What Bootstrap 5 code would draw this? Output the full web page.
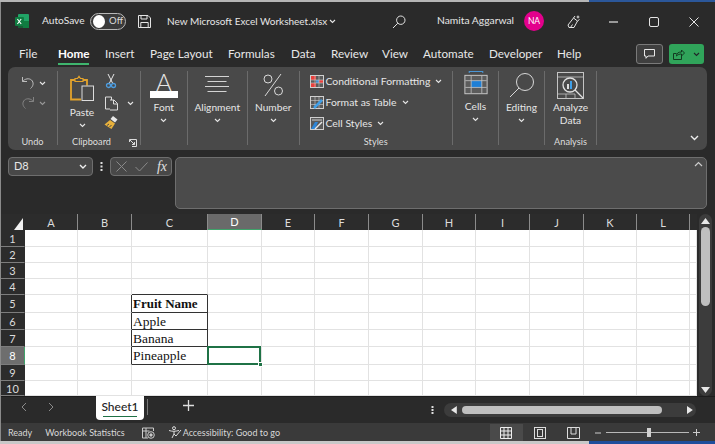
<!DOCTYPE html>
<html lang="en"><head><meta charset="utf-8"><title>Excel</title>
<link href="https://cdn.jsdelivr.net/npm/bootstrap@5.3.0/dist/css/bootstrap.min.css" rel="stylesheet">
<style>
html,body{margin:0;background:#2a2a2a;overflow:hidden}
body{font-family:Lato,Roboto,sans-serif;font-size:11px;color:#e6e6e6}
.shot{width:715px;height:444px}
.edge-top{height:2px;background:linear-gradient(90deg,#b5b5b5 0 589px,#2b579a 589px)}
.edge-bot{height:3px;background:linear-gradient(90deg,#c8c8c8 0 589px,#1f4e9c 589px)}
.win{height:439px;border-left:1px solid #8a8a8a;background:#2a2a2a}
.sprite{width:0;height:0;position:absolute}
.titlebar{height:38px;padding-left:14px}
.t-auto{margin-left:13px;width:48px;font-size:10.2px;white-space:nowrap}
.togl{width:36px;height:17px;border:1px solid #b8b8b8;border-radius:9px;background:#3a3a3a;padding:0 2px;font-size:9.500px;color:#ddd}
.togl i{width:13px;height:13px;border-radius:50%;background:#fff;display:block;margin-right:4px}
.t-save{margin-left:11px}
.t-doc{margin-left:15px;width:162px;white-space:nowrap;font-size:10px}
.t-search{margin-left:56px;width:45px}
.t-name{width:87px;white-space:nowrap;font-size:10.3px}
.avatar{width:20px;height:20px;border-radius:50%;background:#e3008c;color:#fff;font-size:8.500px;line-height:20px;text-align:center}
.t-pen{margin-left:23px;width:42px}
.t-min{width:40px}.t-max{width:40px}
.tabstrip{height:27px;padding-left:18px;display:grid;grid-template-columns:39px 47px 45px 78px 63px 40px 51px 41px 66px 68px 79px 33px 38px;align-items:start}
.tabitem{font-size:11.7px;line-height:26px;white-space:nowrap;position:relative;color:#e8e8e8}
.tabon{font-weight:700;color:#fff}
.tabon::after{content:"";position:absolute;left:0;width:31px;top:23px;height:2px;background:#3fb56e}
.combtn{width:27px;height:20px;margin-top:4px;border:1px solid #7a7a7a;background:#3f3f3f;border-radius:3px}
.sharebtn{width:35px;height:20px;margin-top:4px;background:#30a45a;border-radius:3px}
.ribbon{height:83px;margin:0 8px 0 7px;background:#494949;border-radius:7px;padding:4px 0 5px 0}
.rgroup{border-right:1px solid #6b6b6b;flex:none}
.rbody{height:63px}
.rlabel{height:11px;line-height:15px;text-align:center;font-size:9.2px;color:#dedede;white-space:nowrap}
.w-undo{width:50px}.w-clip{width:83px}.w-font{width:46.500px}.w-align{width:60.500px}.w-num{width:51.500px}.w-sty{width:153.500px}.w-cell{width:46px}.w-edit{width:46px}.w-ana{width:52px}
.bigico{height:29px;margin-top:1px}
.biglbl{font-size:10.2px;line-height:13px;text-align:center;white-space:nowrap}
.glyph-a{font:300 24px/19px Lato,sans-serif;height:19px;margin-top:1px;color:#e6e6e6}
.fontbar{width:28px;height:7px;background:#fff;margin-bottom:3px}
.car{width:7px;height:5px;margin-top:4px;display:block}
.undo-col{padding:2px 0 0 13px}
.undo-row{height:20px}
.paste-col{width:48px}
.paste-col .bigico{height:30px;margin-top:3px}
.paste-col .biglbl{margin-top:2px}
.small-col{padding-top:1px;margin-left:-2px}
.small-row{height:21px}
.launch-txt{flex-grow:1;padding-right:4px}
.launch{margin:5px 3px 0 0}
.sty-col{padding-left:10px}
.sty-row{height:21px;font-size:10.4px;white-space:nowrap;gap:2px}
.sty-row .car{margin:0 0 0 3px}
.fx-row{height:64px;padding:7px 8px 5px 7px}
.namebox{width:85px;height:19px;border:1px solid #6e6e6e;border-radius:4px;background:#484848;padding:0 5px;font-size:11px}
.fxdots{width:17px}
.fxbox{width:62px;height:19px;border:1px solid #6e6e6e;border-radius:4px;background:#484848;padding:0 4px 0 5px}
.fxglyph{font-family:"Liberation Serif",serif;font-style:italic;font-size:14px;color:#e0e0e0;line-height:1}
.fxinput{flex-grow:1;margin-left:3px;height:52px;border:1px solid #6e6e6e;border-radius:5px;background:#4b4b4b;padding:3px 3px}
.gridwrap{height:182px}
table.sheet{table-layout:fixed;border-collapse:separate;border-spacing:0;width:696px;background:#fff}
.sheet col:nth-child(1){width:24px}
.sheet col.cw53{width:53px}.sheet col.cw54{width:54px}.sheet col.cw76{width:76px}.sheet col.cw7{width:7px}
.sheet th{font-weight:400;background:#2c2c2c;color:#dcdcdc;font-size:11px;text-align:center;padding:0;line-height:1}
.sheet thead th{height:16px;border-right:1px solid #8b8b8b}
.sheet thead th:first-child{border-right:none;text-align:right;padding:0 2px 0 0;vertical-align:bottom}
.sheet thead th:last-child{border-right:none}
.sheet thead th.hsel{background:#6a6a6a;color:#fff;border-bottom:1px solid #3fa36a}
.sheet tbody th{border-bottom:1px solid #7d7d7d;border-right:1px solid #2c2c2c}
.sheet tbody th.rsel{background:#6e6e6e;color:#fff;border-right:1px solid #3fa36a}
.sheet td{border-right:1px solid #e2e2e2;border-bottom:1px solid #e2e2e2;padding:1px 1px 0;font:13.500px/1 "Liberation Serif",serif;color:#111;white-space:nowrap;overflow:visible}
.sheet td b{font-size:13px}
.sheet td.brd-r{border-right-color:#333}
.sheet td.brd-b{border-bottom-color:#333}
.h15{height:15px}.h16{height:16px}.h17{height:17px}.h18{height:18px}
.sheet td.picked{position:relative}
.sheet td.picked::after{content:"";position:absolute;left:-1px;top:-1px;right:0;bottom:-1px;border:2px solid #1f7246}
.sheet td.picked::before{content:"";position:absolute;right:-2px;bottom:-3px;width:5px;height:5px;background:#1f7246;border:1px solid #fff;z-index:1}
.vscroll{width:18px;background:#2a2a2a;padding:0 3px 0 2px}
.vtrack{width:13px;height:182px;background:#3c3c3c;border-radius:7px;padding:4px 2px 3px 2px}
.vthumb{width:9px;height:79px;margin-top:3px;background:#bfbfbf;border-radius:5px}
.tabbar{height:27px;border-top:1px solid #1c1c1c}
.navs{width:95px;padding-left:20px;gap:21px;height:20px}
.sheettab{width:48px;height:24px;margin-top:-1px;background:#fff;border-radius:0 0 4px 4px;color:#222;font-size:12px;text-align:center;line-height:22px;position:relative;font-weight:500}
.sheettab::after{content:"";position:absolute;left:7px;right:7px;bottom:3px;height:1.500px;background:#1f7246}
.tabsep{width:1px;height:16px;background:#777;margin:2px 0 0 3px}
.plus{margin-left:35px;margin-top:3px}
.tabdots{margin-left:231px;margin-top:1px;width:20px;padding-left:6px}
.htrack{width:252px;height:14px;margin-left:-1px;margin-top:6px;background:#3c3c3c;border-radius:7px;padding:0 3px}
.hthumb{width:206px;height:8px;background:#bfbfbf;border-radius:4px;margin:0 25px 0 5px}
.statusbar{height:18px;background:#3a3a3a;font-size:9px;color:#d8d8d8;padding:1px 15px 0 7px;white-space:nowrap}
.s-stat{margin-left:13px}
.s-ico1{margin-left:17px}
.s-ico2{margin-left:14px}
.s-acc{margin-left:1px}
.s-view{margin-left:auto;width:33px;height:17px;background:#4a4a4a;padding-left:10px}
.s-v2{margin-left:11px}
.s-v3{margin-left:21px}
.s-minus{margin-left:15px}
.slider{width:83px;height:1px;background:#b8b8b8;margin:0 4px 0 5px;position:relative}
.slider::after{content:"";position:absolute;left:41px;top:-4px;width:4px;height:9px;background:#d0d0d0}
</style></head><body>
<svg class="sprite" aria-hidden="true"><defs>
<symbol id="cv" viewBox="0 0 7 5"><path d="M1 1l2.500 2.500L6 1" fill="none" stroke="currentColor" stroke-width="1.100"/></symbol>
</defs></svg>
<div class="shot d-flex flex-column">
<div class="edge-top"></div>
<div class="win">
 <div class="titlebar d-flex align-items-center">
  <svg width="14" height="14" viewBox="0 0 14 14"><rect x="3" y="0" width="11" height="14" rx="1" fill="#21a366"/><rect x="8" y="7" width="6" height="7" fill="#107c41"/><rect x="3" y="7" width="5" height="7" fill="#185c37"/><rect x="0" y="3" width="9" height="9" rx="1" fill="#107c41"/><path d="M2.400 5l3.800 5M6.200 5l-3.800 5" stroke="#fff" stroke-width="1.100"/></svg>
  <span class="t-auto">AutoSave</span>
  <span class="togl d-flex align-items-center"><i></i>Off</span>
  <svg class="t-save" width="15" height="15" viewBox="0 0 15 15" fill="none" stroke="#e4e4e4" stroke-width="1"><path d="M1.500 1.500h9.500l2.500 2.500v9.500h-12z"/><path d="M4 1.500v3.500h6v-3.500M3.800 13.500v-5h7.400v5"/></svg>
  <span class="t-doc d-flex align-items-center">New Microsoft Excel Worksheet.xlsx</span>
  <svg class="car m-0" viewBox="0 0 7 5"><use href="#cv"/></svg>
  <span class="t-search"><svg width="14" height="14" viewBox="0 0 14 14" fill="none" stroke="#e4e4e4" stroke-width="1"><circle cx="8.800" cy="5.200" r="4.200"/><path d="M5.800 8.200L1 13"/></svg></span>
  <span class="t-name">Namita Aggarwal</span>
  <span class="avatar">NA</span>
  <span class="t-pen"><svg width="15" height="15" viewBox="0 0 15 15" fill="none" stroke="#e4e4e4" stroke-width="1"><path d="M2 13.500L1 11l5.500-7 4 3-3.500 6.500zM6.500 4l1.500-2M10.500 7l2-1.500M3.500 13.500l2-3"/><path d="M11 1l.6 1.400L13 3l-1.400.6L11 5l-.6-1.400L9 3l1.400-.6z" fill="#e4e4e4" stroke="none"/></svg></span>
  <span class="t-min"><svg width="9" height="2" viewBox="0 0 9 2"><path d="M0 1h9" stroke="#e4e4e4" stroke-width="1.200"/></svg></span>
  <span class="t-max"><svg width="10" height="10" viewBox="0 0 10 10"><rect x=".5" y=".5" width="9" height="9" rx="1.500" fill="none" stroke="#e4e4e4"/></svg></span>
  <span><svg width="10" height="10" viewBox="0 0 10 10"><path d="M.5.5l9 9M9.500.5l-9 9" stroke="#e4e4e4" stroke-width="1"/></svg></span>
 </div>
 <div class="tabstrip">
  <span class="tabitem">File</span><span class="tabitem tabon">Home</span><span class="tabitem">Insert</span><span class="tabitem">Page Layout</span><span class="tabitem">Formulas</span><span class="tabitem">Data</span><span class="tabitem">Review</span><span class="tabitem">View</span><span class="tabitem">Automate</span><span class="tabitem">Developer</span><span class="tabitem">Help</span>
  <span class="combtn d-flex align-items-center justify-content-center"><svg width="11" height="10" viewBox="0 0 11 10"><path d="M.5.5h10v6.500H4L2 9.300V7H.5z" fill="none" stroke="#e8e8e8"/></svg></span>
  <span class="sharebtn d-flex align-items-center justify-content-center gap-2"><svg width="12" height="12" viewBox="0 0 12 12" fill="none" stroke="#123a20" stroke-width="1"><path d="M.5 5.500h3M.5 5.500v6h8V8"/><path d="M3.500 8c0-3 2-4 5-4V2l3 3-3 3V6c-2 0-3.500.5-5 2z"/></svg><svg class="car text-dark m-0" viewBox="0 0 7 5"><use href="#cv"/></svg></span>
 </div>
 <div class="ribbon d-flex">
  <div class="rgroup w-undo d-flex flex-column">
   <div class="rbody undo-col">
    <div class="undo-row d-flex align-items-center gap-1"><svg width="14" height="15" viewBox="0 0 14 15" fill="none" stroke="#bdbdbd" stroke-width="1"><path d="M1.500 1v4.500H6M1.500 5.500C4 2.500 8 2 10.500 4c2.500 2.500 2 6-1 8.500"/></svg><svg class="car m-0" viewBox="0 0 7 5"><use href="#cv"/></svg></div>
    <div class="undo-row d-flex align-items-center gap-1 opacity-50"><svg width="14" height="15" viewBox="0 0 14 15" fill="none" stroke="#bdbdbd" stroke-width="1"><path d="M12.500 1v4.500H8M12.500 5.500C10 2.500 6 2 3.500 4c-2.500 2.500-2 6 1 8.500"/></svg><svg class="car m-0" viewBox="0 0 7 5"><use href="#cv"/></svg></div>
   </div>
   <div class="rlabel">Undo</div>
  </div>
  <div class="rgroup w-clip d-flex flex-column">
   <div class="rbody d-flex">
    <div class="paste-col d-flex flex-column align-items-center">
     <svg class="bigico" width="25" height="27" viewBox="0 0 25 27" fill="none"><path d="M5 4.500H1V24h10" stroke="#e3a32c" stroke-width="1.800"/><path d="M5 6V3h2.500L9 .8 10.500 3H13v3z" stroke="#e3a32c" stroke-width="1.200"/><path d="M13 4.500h4V10" stroke="#e3a32c" stroke-width="1.800"/><rect x="12" y="10.500" width="11.500" height="14.500" stroke="#dcdcdc" fill="#4a4a4a"/></svg>
     <span class="biglbl">Paste</span>
     <svg class="car" viewBox="0 0 7 5"><use href="#cv"/></svg>
    </div>
    <div class="small-col d-flex flex-column">
     <div class="small-row"><svg width="14" height="16" viewBox="0 0 14 16" fill="none"><path d="M4 1l4.500 9M10 1L5.500 10" stroke="#e8e8e8"/><circle cx="4.500" cy="12.500" r="2" stroke="#4d9de0" stroke-width="1.300"/><circle cx="9.500" cy="12.500" r="2" stroke="#4d9de0" stroke-width="1.300"/></svg></div>
     <div class="small-row d-flex align-items-center gap-2"><svg width="15" height="15" viewBox="0 0 15 15" fill="none" stroke="#dcdcdc"><path d="M1.500 1h6v12h-6z"/><path d="M6 4h4l3.500 3.500V14H6" fill="#4a4a4a"/><path d="M9.500 4v4h4"/></svg><svg class="car m-0" viewBox="0 0 7 5"><use href="#cv"/></svg></div>
     <div class="small-row"><svg width="14" height="14" viewBox="0 0 14 14"><path d="M9 0l4.500 3.500-2.500 3L6.500 3z" fill="#e8e8e8"/><path d="M6 4l5 3.500L7.500 13 .5 8.500z" fill="#e8b13c"/><path d="M3 9.500l2-1.500M5.500 11l2-2" stroke="#4a4a4a"/></svg></div>
    </div>
   </div>
   <div class="rlabel d-flex"><span class="launch-txt">Clipboard</span><svg class="launch" width="8" height="8" viewBox="0 0 8 8" fill="none" stroke="#dcdcdc"><path d="M.5 3V.5h7v7H3"/><path d="M1 1l4.500 4.500M3 5.500h2.500V3"/></svg></div>
  </div>
  <div class="rgroup w-font d-flex flex-column">
   <div class="rbody d-flex flex-column align-items-center">
    <div class="glyph-a">A</div><div class="fontbar"></div>
    <span class="biglbl">Font</span>
    <svg class="car" viewBox="0 0 7 5"><use href="#cv"/></svg>
   </div><div class="rlabel"></div>
  </div>
  <div class="rgroup w-align d-flex flex-column">
   <div class="rbody d-flex flex-column align-items-center">
    <svg class="bigico" width="26" height="29" viewBox="0 0 26 29" stroke="#d4d4d4" stroke-width="1"><path d="M1 4.500h24M3.500 9.500h19M1 14.500h24M3.500 19.500h19"/></svg>
    <span class="biglbl">Alignment</span>
    <svg class="car" viewBox="0 0 7 5"><use href="#cv"/></svg>
   </div><div class="rlabel"></div>
  </div>
  <div class="rgroup w-num d-flex flex-column">
   <div class="rbody d-flex flex-column align-items-center">
    <svg class="bigico" width="24" height="29" viewBox="0 0 24 29" fill="none" stroke="#d8d8d8"><circle cx="7" cy="7" r="4"/><circle cx="17.500" cy="19" r="4"/><path d="M20 2L4 24"/></svg>
    <span class="biglbl">Number</span>
    <svg class="car" viewBox="0 0 7 5"><use href="#cv"/></svg>
   </div><div class="rlabel"></div>
  </div>
  <div class="rgroup w-sty d-flex flex-column">
   <div class="rbody sty-col">
    <div class="sty-row d-flex align-items-center"><svg width="14" height="13" viewBox="0 0 14 13"><rect x=".5" y=".5" width="13" height="12" fill="#5a5a5a" stroke="#cfcfcf"/><path d="M1 1h5v4H1zM9 5h4v3H9zM1 8h5v4H1z" fill="#e8403c"/><path d="M6 5h3v3H6z" fill="#3f8fd8"/><path d="M5 1v11M9 1v11M1 5h12M1 8h12" stroke="#cfcfcf" stroke-width=".6"/></svg><span>Conditional Formatting</span><svg class="car" viewBox="0 0 7 5"><use href="#cv"/></svg></div>
    <div class="sty-row d-flex align-items-center"><svg width="14" height="13" viewBox="0 0 14 13"><rect x=".5" y=".5" width="13" height="12" fill="#5a5a5a" stroke="#cfcfcf"/><path d="M1 4.500h12M1 8.500h12M5 1v11M9 1v11" stroke="#cfcfcf" stroke-width=".6"/><path d="M4 12L12 4" stroke="#3f9fe8" stroke-width="2.500"/></svg><span>Format as Table</span><svg class="car" viewBox="0 0 7 5"><use href="#cv"/></svg></div>
    <div class="sty-row d-flex align-items-center"><svg width="14" height="13" viewBox="0 0 14 13"><rect x=".5" y=".5" width="13" height="12" fill="#5a5a5a" stroke="#cfcfcf"/><path d="M2 3h10" stroke="#cfcfcf"/><path d="M1 12l4-7h3l-3 7z" fill="#2e86d8"/><path d="M5 12l7-7" stroke="#e8e8e8" stroke-width="1.500"/></svg><span>Cell Styles</span><svg class="car" viewBox="0 0 7 5"><use href="#cv"/></svg></div>
   </div>
   <div class="rlabel">Styles</div>
  </div>
  <div class="rgroup w-cell d-flex flex-column">
   <div class="rbody d-flex flex-column align-items-center">
    <svg class="bigico mt-0" width="24" height="30" viewBox="0 0 24 30"><path d="M5 .5h14M5 0v2M19 0v2" stroke="#4d9de0"/><rect x=".5" y="4.500" width="23" height="19" fill="#5c5c5c" stroke="#c8c8c8"/><rect x="7" y="10" width="11" height="7" fill="#1e7fd6"/><path d="M1 10h22M1 17h22M7 5v18M18 5v18" stroke="#c8c8c8" stroke-width=".8" fill="none"/></svg>
    <span class="biglbl">Cells</span>
    <svg class="car" viewBox="0 0 7 5"><use href="#cv"/></svg>
   </div><div class="rlabel"></div>
  </div>
  <div class="rgroup w-edit d-flex flex-column">
   <div class="rbody d-flex flex-column align-items-center">
    <svg class="bigico" width="26" height="29" viewBox="0 0 26 29" fill="none" stroke="#d8d8d8"><circle cx="16" cy="10" r="8.500"/><path d="M10 16L1 25"/></svg>
    <span class="biglbl">Editing</span>
    <svg class="car" viewBox="0 0 7 5"><use href="#cv"/></svg>
   </div><div class="rlabel"></div>
  </div>
  <div class="rgroup w-ana d-flex flex-column">
   <div class="rbody d-flex flex-column align-items-center">
    <svg class="bigico" width="28" height="29" viewBox="0 0 28 29" fill="none" stroke="#c4c4c4"><rect x=".5" y=".5" width="26" height="26" stroke-width="1"/><path d="M1 5h26M1 22h17M9 22v5M18 22v5" stroke-width=".8"/><circle cx="13" cy="13" r="7" stroke-width="1.300" stroke="#e0e0e0"/><path d="M18 18l8 8" stroke="#e0e0e0" stroke-width="1.300"/><path d="M10 12h2v5h-2z" fill="#ddd" stroke="none"/><path d="M13 9h2v8h-2z" fill="#3f9fe8" stroke="none"/></svg>
    <span class="biglbl">Analyze<br>Data</span>
   </div>
   <div class="rlabel">Analysis</div>
  </div>
  <div class="flex-grow-1 d-flex justify-content-end align-items-end pe-2"><svg width="9" height="6" viewBox="0 0 9 6" class="mb-1"><path d="M1 1l3.500 3.500L8 1" fill="none" stroke="#eee" stroke-width="1.400"/></svg></div>
 </div>
 <div class="fx-row d-flex align-items-start">
  <div class="namebox d-flex align-items-center justify-content-between"><span>D8</span><svg width="8" height="6" viewBox="0 0 8 6"><path d="M1 1l3 3 3-3" fill="none" stroke="#eee" stroke-width="1.400"/></svg></div>
  <div class="fxdots d-flex justify-content-center align-self-start mt-1"><svg width="3" height="11" viewBox="0 0 3 11" fill="#ddd"><rect x=".5" y="1" width="2" height="2"/><rect x=".5" y="4.500" width="2" height="2"/><rect x=".5" y="8" width="2" height="2"/></svg></div>
  <div class="fxbox d-flex align-items-center justify-content-between"><svg width="11" height="11" viewBox="0 0 11 11"><path d="M.5.5l10 10M10.500.5l-10 10" stroke="#8a8a8a"/></svg><svg width="13" height="10" viewBox="0 0 13 10"><path d="M.5 5l4 4L12.500.5" fill="none" stroke="#8a8a8a"/></svg><span class="fxglyph">fx</span></div>
  <div class="fxinput d-flex justify-content-end align-items-start"><svg width="9" height="6" viewBox="0 0 9 6"><path d="M1 5l3.500-3.500L8 5" fill="none" stroke="#ccc" stroke-width="1.200"/></svg></div>
 </div>
 <div class="gridwrap d-flex">
  <table class="sheet">
   <colgroup><col><col class="cw53"><col class="cw54"><col class="cw76"><col class="cw54"><col class="cw53"><col class="cw54"><col class="cw54"><col class="cw53"><col class="cw54"><col class="cw54"><col class="cw53"><col class="cw53"><col class="cw7"></colgroup>
   <thead><tr><th><svg width="9" height="12" viewBox="0 0 9 12" class="d-block ms-auto"><path d="M9 0v12H0z" fill="#f2f2f2"/></svg></th><th>A</th><th>B</th><th>C</th><th class="hsel">D</th><th>E</th><th>F</th><th>G</th><th>H</th><th>I</th><th>J</th><th>K</th><th>L</th><th></th></tr></thead>
   <tbody>
    <tr class="h17"><th>1</th><td></td><td></td><td></td><td></td><td></td><td></td><td></td><td></td><td></td><td></td><td></td><td></td><td></td></tr>
    <tr class="h16"><th>2</th><td></td><td></td><td></td><td></td><td></td><td></td><td></td><td></td><td></td><td></td><td></td><td></td><td></td></tr>
    <tr class="h16"><th>3</th><td></td><td></td><td></td><td></td><td></td><td></td><td></td><td></td><td></td><td></td><td></td><td></td><td></td></tr>
    <tr class="h16"><th>4</th><td></td><td></td><td class="brd-b"></td><td></td><td></td><td></td><td></td><td></td><td></td><td></td><td></td><td></td><td></td></tr>
    <tr class="h18"><th>5</th><td></td><td class="brd-r"></td><td class="brd-r brd-b"><b>Fruit Name</b></td><td></td><td></td><td></td><td></td><td></td><td></td><td></td><td></td><td></td><td></td></tr>
    <tr class="h17"><th>6</th><td></td><td class="brd-r"></td><td class="brd-r brd-b">Apple</td><td></td><td></td><td></td><td></td><td></td><td></td><td></td><td></td><td></td><td></td></tr>
    <tr class="h17"><th>7</th><td></td><td class="brd-r"></td><td class="brd-r brd-b">Banana</td><td></td><td></td><td></td><td></td><td></td><td></td><td></td><td></td><td></td><td></td></tr>
    <tr class="h18"><th class="rsel">8</th><td></td><td class="brd-r"></td><td class="brd-r brd-b">Pineapple</td><td class="picked"></td><td></td><td></td><td></td><td></td><td></td><td></td><td></td><td></td><td></td></tr>
    <tr class="h16"><th>9</th><td></td><td></td><td></td><td></td><td></td><td></td><td></td><td></td><td></td><td></td><td></td><td></td><td></td></tr>
    <tr class="h15"><th>10</th><td></td><td></td><td></td><td></td><td></td><td></td><td></td><td></td><td></td><td></td><td></td><td></td><td></td></tr>
   </tbody>
  </table>
  <div class="vscroll"><div class="vtrack d-flex flex-column align-items-center justify-content-between"><svg width="9" height="6" viewBox="0 0 9 6"><path d="M4.500 0L9 6H0z" fill="#e8e8e8"/></svg><div class="vthumb me-auto"></div><div class="flex-grow-1"></div><svg width="9" height="6" viewBox="0 0 9 6"><path d="M4.500 6L9 0H0z" fill="#e8e8e8"/></svg></div></div>
 </div>
 <div class="tabbar d-flex align-items-start">
  <div class="navs d-flex align-items-center"><svg width="6" height="10" viewBox="0 0 6 10"><path d="M5 1L1 5l4 4" fill="none" stroke="#8a8a8a"/></svg><svg width="6" height="10" viewBox="0 0 6 10"><path d="M1 1l4 4-4 4" fill="none" stroke="#8a8a8a"/></svg></div>
  <div class="sheettab">Sheet1</div>
  <div class="tabsep"></div>
  <svg class="plus" width="11" height="11" viewBox="0 0 11 11"><path d="M5.500 0v11M0 5.500h11" stroke="#ddd" stroke-width="1.300"/></svg>
  <div class="tabdots d-flex"><svg class="mt-2" width="3" height="8" viewBox="0 0 3 8" fill="#ddd"><rect x=".5" y="0" width="2" height="2"/><rect x=".5" y="3" width="2" height="2"/><rect x=".5" y="6" width="2" height="2"/></svg></div>
  <div class="htrack d-flex align-items-center"><svg width="6" height="8" viewBox="0 0 6 8" class="ms-1"><path d="M0 4l6-4v8z" fill="#e8e8e8"/></svg><div class="hthumb"></div><svg width="6" height="8" viewBox="0 0 6 8"><path d="M6 4L0 0v8z" fill="#e8e8e8"/></svg></div>
 </div>
 <div class="statusbar d-flex align-items-center">
  <span>Ready</span><span class="s-stat">Workbook Statistics</span>
  <svg class="s-ico1" width="13" height="12" viewBox="0 0 13 12" fill="none" stroke="#ccc"><path d="M.5 1h11v3M.5 1v10H6M.5 4h7M4 1v10"/><circle cx="9" cy="8" r="3.300"/><circle cx="9" cy="8" r="1.200" fill="#ccc"/></svg>
  <svg class="s-ico2" width="13" height="13" viewBox="0 0 13 13" fill="none" stroke="#ddd"><circle cx="5" cy="2.200" r="1.500"/><path d="M0 4.500c3 1 6 1 10 0M5 5v3l-2 4M5 8l2 2 5-6"/></svg>
  <span class="s-acc">Accessibility: Good to go</span>
  <span class="s-view d-flex align-items-center"><svg width="12" height="12" viewBox="0 0 12 12" fill="none" stroke="#eee"><path d="M.5.5h11v11H.5zM4 1v10M8 1v10M1 4h10M1 8h10"/></svg></span>
  <svg class="s-v2" width="12" height="12" viewBox="0 0 12 12" fill="none" stroke="#ddd"><rect x=".5" y=".5" width="11" height="11"/><rect x="3.500" y="2.500" width="5" height="7"/></svg>
  <svg class="s-v3" width="13" height="12" viewBox="0 0 13 12" fill="none" stroke="#ddd"><path d="M.5.5h12v11H.5zM4 1v6h5V1"/></svg>
  <svg class="s-minus" width="6" height="2" viewBox="0 0 6 2"><path d="M0 1h6" stroke="#ccc"/></svg>
  <div class="slider"></div>
  <svg width="7" height="7" viewBox="0 0 7 7"><path d="M0 3.500h7M3.500 0v7" stroke="#ccc"/></svg>
 </div>
</div>
<div class="edge-bot"></div>
</div>
<script src="https://cdn.jsdelivr.net/npm/bootstrap@5.3.0/dist/js/bootstrap.bundle.min.js"></script>
</body></html>
